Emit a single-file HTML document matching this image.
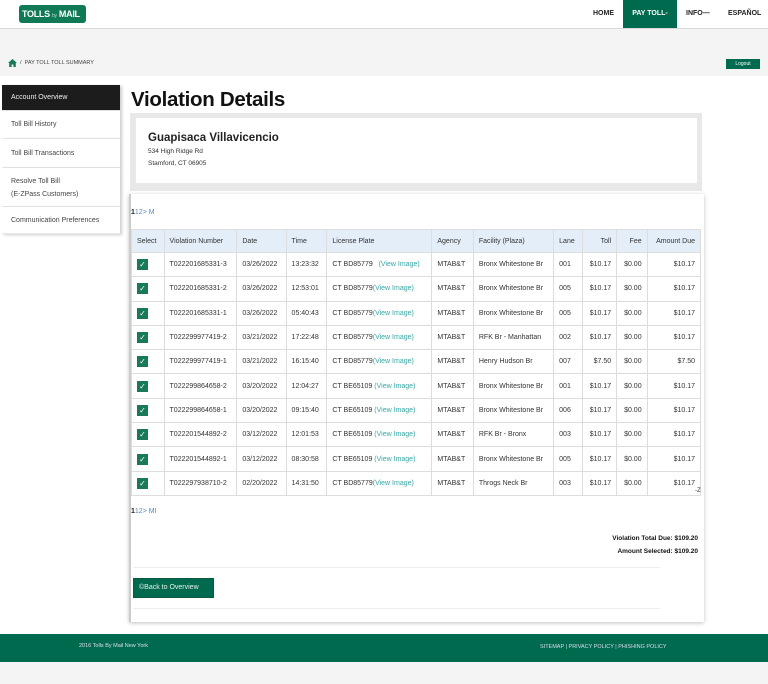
<!DOCTYPE html>
<html><head><meta charset="utf-8"><style>
*{box-sizing:border-box;margin:0;padding:0}
body{width:768px;height:684px;font-family:"Liberation Sans",sans-serif;background:#f4f4f4;position:relative;overflow:hidden;color:#333}
.abs{position:absolute}
#hdr{left:0;top:0;width:768px;height:29px;background:#fff;border-bottom:1px solid #d8d8d8}
.logo{left:19px;top:5px;width:67px;height:18px;background:#0f7a55;border-radius:3px;color:#fff;font-weight:bold;font-size:9px;line-height:18px;padding-left:3px;letter-spacing:-.3px}
.nav{top:0;height:28px;line-height:28px;font-size:7px;font-weight:bold;color:#222}
#main{left:0;top:76px;width:768px;height:558px;background:#fff}
.side{left:2px;width:118px;font-size:7px;color:#444;background:#fff;border-bottom:1px solid #e8e8e8;padding-left:9px;box-shadow:2px 1px 3px rgba(0,0,0,.2)}
table{border-collapse:collapse;font-size:7px;color:#333}
td,th{border:1px solid #ddd;padding:0 5px;height:24.3px;white-space:nowrap;font-weight:normal;text-align:left}
th{background:#e4eef9;height:23px}
.r{text-align:right}
.cb{display:inline-block;width:11px;height:11px;background:#1a7a58;color:#fff;font-size:8px;line-height:11px;text-align:center;vertical-align:middle}
.vi{color:#3aa6a6}
#foot{left:0;top:634px;width:768px;height:28px;background:#006a4e;color:#dde;font-size:5.5px}
</style></head><body>
<div id="hdr" class="abs"></div>
<div class="abs logo">TOLLS <span style="font-size:5px;font-weight:normal;opacity:.7">by</span> MAIL</div>
<div class="abs nav" style="left:593px">HOME</div>
<div class="abs nav" style="left:623px;width:54px;background:#006a4e;color:#fff;text-align:center">PAY TOLL-</div>
<div class="abs nav" style="left:686px">INFO—</div>
<div class="abs nav" style="left:728px">ESPAÑOL</div>
<svg class="abs" style="left:8px;top:59px" width="9" height="8" viewBox="0 0 9 8"><path d="M4.5 0L0 4h1.2v4h2.4V5.5h1.8V8h2.4V4H9z" fill="#1a7a58"/></svg>
<div class="abs" style="left:20px;top:60px;font-size:5.5px;color:#444">/ &nbsp;PAY TOLL TOLL SUMMARY</div>
<div class="abs" style="left:726px;top:59px;width:34px;height:10px;background:#006a4e;color:#fff;font-size:5px;text-align:center;line-height:10px">Logout</div>
<div id="main" class="abs"></div>
<div class="abs side" style="top:85px;height:26px;line-height:26px;background:#1c1c1c;color:#eee">Account Overview</div>
<div class="abs side" style="top:111px;height:28px;line-height:28px">Toll Bill History</div>
<div class="abs side" style="top:139px;height:29px;line-height:29px">Toll Bill Transactions</div>
<div class="abs side" style="top:168px;height:39px;padding-top:7px;line-height:13px">Resolve Toll Bill<br>(E-ZPass Customers)</div>
<div class="abs side" style="top:207px;height:27px;line-height:27px">Communication Preferences</div>
<div class="abs" style="left:131px;top:88px;font-size:20.5px;font-weight:bold;color:#111;letter-spacing:-.3px">Violation Details</div>
<div class="abs" style="left:130px;top:113px;width:572px;height:78px;background:#e8e8e8"></div>
<div class="abs" style="left:136px;top:118px;width:561px;height:65px;background:#fff"></div>
<div class="abs" style="left:148px;top:132px;font-size:11.5px;font-weight:bold;color:#222">Guapisaca Villavicencio</div>
<div class="abs" style="left:148px;top:146px;font-size:6.5px;line-height:12px;color:#333">534 High Ridge Rd<br>Stamford, CT 06905</div>
<div class="abs" style="left:129px;top:194px;width:575px;height:428px;background:#fff;box-shadow:0 1px 4px rgba(0,0,0,.25);border-left:2px solid #ccc"></div>
<div class="abs" style="left:131px;top:209px;font-size:7px;color:#5a8ac0"><b style="color:#222">1</b>12&gt; M</div>
<table class="abs" style="left:131px;top:229px;width:570px">
<tr><th>Select</th><th>Violation Number</th><th>Date</th><th>Time</th><th>License Plate</th><th>Agency</th><th>Facility (Plaza)</th><th>Lane</th><th class="r">Toll</th><th class="r">Fee</th><th class="r">Amount Due</th></tr>
<tr><td><span class="cb">✓</span></td><td>T022201685331-3</td><td>03/26/2022</td><td>13:23:32</td><td>CT BD85779 &nbsp;&nbsp;<span class="vi">(View Image)</span></td><td>MTAB&amp;T</td><td>Bronx Whitestone Br</td><td>001</td><td class="r">$10.17</td><td class="r">$0.00</td><td class="r">$10.17</td></tr>
<tr><td><span class="cb">✓</span></td><td>T022201685331-2</td><td>03/26/2022</td><td>12:53:01</td><td>CT BD85779<span class="vi">(View Image)</span></td><td>MTAB&amp;T</td><td>Bronx Whitestone Br</td><td>005</td><td class="r">$10.17</td><td class="r">$0.00</td><td class="r">$10.17</td></tr>
<tr><td><span class="cb">✓</span></td><td>T022201685331-1</td><td>03/26/2022</td><td>05:40:43</td><td>CT BD85779<span class="vi">(View Image)</span></td><td>MTAB&amp;T</td><td>Bronx Whitestone Br</td><td>005</td><td class="r">$10.17</td><td class="r">$0.00</td><td class="r">$10.17</td></tr>
<tr><td><span class="cb">✓</span></td><td>T022299977419-2</td><td>03/21/2022</td><td>17:22:48</td><td>CT BD85779<span class="vi">(View Image)</span></td><td>MTAB&amp;T</td><td>RFK Br - Manhattan</td><td>002</td><td class="r">$10.17</td><td class="r">$0.00</td><td class="r">$10.17</td></tr>
<tr><td><span class="cb">✓</span></td><td>T022299977419-1</td><td>03/21/2022</td><td>16:15:40</td><td>CT BD85779<span class="vi">(View Image)</span></td><td>MTAB&amp;T</td><td>Henry Hudson Br</td><td>007</td><td class="r">$7.50</td><td class="r">$0.00</td><td class="r">$7.50</td></tr>
<tr><td><span class="cb">✓</span></td><td>T022299864658-2</td><td>03/20/2022</td><td>12:04:27</td><td>CT BE65109 <span class="vi">(View Image)</span></td><td>MTAB&amp;T</td><td>Bronx Whitestone Br</td><td>001</td><td class="r">$10.17</td><td class="r">$0.00</td><td class="r">$10.17</td></tr>
<tr><td><span class="cb">✓</span></td><td>T022299864658-1</td><td>03/20/2022</td><td>09:15:40</td><td>CT BE65109 <span class="vi">(View Image)</span></td><td>MTAB&amp;T</td><td>Bronx Whitestone Br</td><td>006</td><td class="r">$10.17</td><td class="r">$0.00</td><td class="r">$10.17</td></tr>
<tr><td><span class="cb">✓</span></td><td>T022201544892-2</td><td>03/12/2022</td><td>12:01:53</td><td>CT BE65109 <span class="vi">(View Image)</span></td><td>MTAB&amp;T</td><td>RFK Br - Bronx</td><td>003</td><td class="r">$10.17</td><td class="r">$0.00</td><td class="r">$10.17</td></tr>
<tr><td><span class="cb">✓</span></td><td>T022201544892-1</td><td>03/12/2022</td><td>08:30:58</td><td>CT BE65109 <span class="vi">(View Image)</span></td><td>MTAB&amp;T</td><td>Bronx Whitestone Br</td><td>005</td><td class="r">$10.17</td><td class="r">$0.00</td><td class="r">$10.17</td></tr>
<tr><td><span class="cb">✓</span></td><td>T022297938710-2</td><td>02/20/2022</td><td>14:31:50</td><td>CT BD85779<span class="vi">(View Image)</span></td><td>MTAB&amp;T</td><td>Throgs Neck Br</td><td>003</td><td class="r">$10.17</td><td class="r">$0.00</td><td class="r">$10.17</td></tr>
</table>
<div class="abs" style="left:695px;top:488px;font-size:6px">-Z</div>
<div class="abs" style="left:131px;top:508px;font-size:7px;color:#5a8ac0"><b style="color:#222">1</b>12&gt; MI</div>
<div class="abs" style="right:70px;top:532px;font-size:6.5px;font-weight:bold;color:#111;text-align:right;line-height:13px">Violation Total Due: $109.20<br>Amount Selected: $109.20</div>
<div class="abs" style="left:133px;top:567px;width:527px;height:1px;background:#eee"></div>
<div class="abs" style="left:133px;top:578px;width:81px;height:20px;background:#006a4e;border:1px solid #0a5a40;color:#e8f0ec;font-size:7px;line-height:18px;padding-left:5px">©Back to Overview</div>
<div class="abs" style="left:133px;top:608px;width:527px;height:1px;background:#eee"></div>
<div id="foot" class="abs"><span class="abs" style="left:79px;top:9px">2016 Tolls By Mail New York</span><span class="abs" style="left:540px;top:10px">SITEMAP | PRIVACY POLICY | PHISHING POLICY</span></div>
</body></html>
